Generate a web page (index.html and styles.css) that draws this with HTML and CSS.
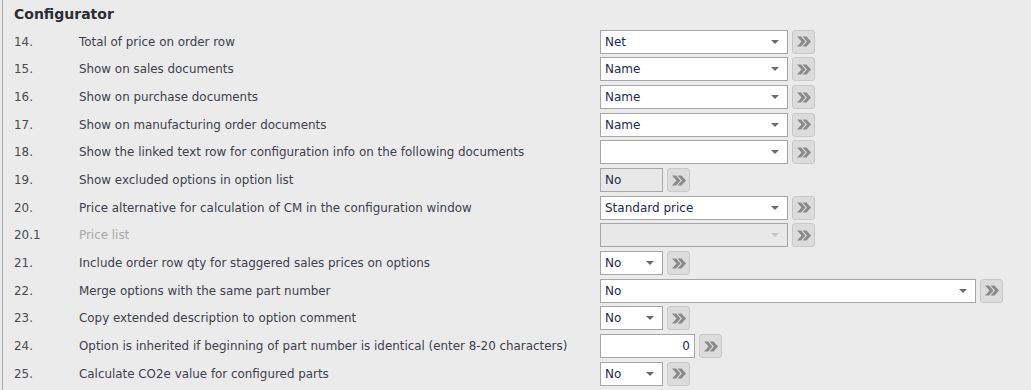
FILE: index.html
```html
<!DOCTYPE html>
<html lang="en">
<head>
  <meta charset="UTF-8" />
  <title>Configurator</title>
  <link rel="stylesheet" href="styles.css">
</head>
<body>

  <!-- Settings panel -->
  <div class="panel">
    <div class="panel-title">Configurator</div>

    <div class="rows">
      <div class="num">14.</div>
      <div class="label">Total of price on order row</div>
      <div class="ctrl"><div class="combo wide"><span>Net</span><i class="arrow"></i></div><div class="more"><svg viewBox="0 0 14 11"><path d="M0 0.5h4l4.5 5-4.5 5H0l4.5-5z M5.5 0.5h4l4.5 5-4.5 5h-4l4.5-5z"/></svg></div></div>

      <div class="num">15.</div>
      <div class="label">Show on sales documents</div>
      <div class="ctrl"><div class="combo wide"><span>Name</span><i class="arrow"></i></div><div class="more"><svg viewBox="0 0 14 11"><path d="M0 0.5h4l4.5 5-4.5 5H0l4.5-5z M5.5 0.5h4l4.5 5-4.5 5h-4l4.5-5z"/></svg></div></div>

      <div class="num">16.</div>
      <div class="label">Show on purchase documents</div>
      <div class="ctrl"><div class="combo wide"><span>Name</span><i class="arrow"></i></div><div class="more"><svg viewBox="0 0 14 11"><path d="M0 0.5h4l4.5 5-4.5 5H0l4.5-5z M5.5 0.5h4l4.5 5-4.5 5h-4l4.5-5z"/></svg></div></div>

      <div class="num">17.</div>
      <div class="label">Show on manufacturing order documents</div>
      <div class="ctrl"><div class="combo wide"><span>Name</span><i class="arrow"></i></div><div class="more"><svg viewBox="0 0 14 11"><path d="M0 0.5h4l4.5 5-4.5 5H0l4.5-5z M5.5 0.5h4l4.5 5-4.5 5h-4l4.5-5z"/></svg></div></div>

      <div class="num">18.</div>
      <div class="label">Show the linked text row for configuration info on the following documents</div>
      <div class="ctrl"><div class="combo wide"><span></span><i class="arrow"></i></div><div class="more"><svg viewBox="0 0 14 11"><path d="M0 0.5h4l4.5 5-4.5 5H0l4.5-5z M5.5 0.5h4l4.5 5-4.5 5h-4l4.5-5z"/></svg></div></div>

      <div class="num">19.</div>
      <div class="label">Show excluded options in option list</div>
      <div class="ctrl"><div class="combo small readonly"><span>No</span></div><div class="more"><svg viewBox="0 0 14 11"><path d="M0 0.5h4l4.5 5-4.5 5H0l4.5-5z M5.5 0.5h4l4.5 5-4.5 5h-4l4.5-5z"/></svg></div></div>

      <div class="num">20.</div>
      <div class="label">Price alternative for calculation of CM in the configuration window</div>
      <div class="ctrl"><div class="combo wide"><span>Standard price</span><i class="arrow"></i></div><div class="more"><svg viewBox="0 0 14 11"><path d="M0 0.5h4l4.5 5-4.5 5H0l4.5-5z M5.5 0.5h4l4.5 5-4.5 5h-4l4.5-5z"/></svg></div></div>

      <div class="num">20.1</div>
      <div class="label disabled">Price list</div>
      <div class="ctrl"><div class="combo wide readonly"><span></span><i class="arrow dim"></i></div><div class="more"><svg viewBox="0 0 14 11"><path d="M0 0.5h4l4.5 5-4.5 5H0l4.5-5z M5.5 0.5h4l4.5 5-4.5 5h-4l4.5-5z"/></svg></div></div>

      <div class="num">21.</div>
      <div class="label">Include order row qty for staggered sales prices on options</div>
      <div class="ctrl"><div class="combo small"><span>No</span><i class="arrow"></i></div><div class="more"><svg viewBox="0 0 14 11"><path d="M0 0.5h4l4.5 5-4.5 5H0l4.5-5z M5.5 0.5h4l4.5 5-4.5 5h-4l4.5-5z"/></svg></div></div>

      <div class="num">22.</div>
      <div class="label">Merge options with the same part number</div>
      <div class="ctrl"><div class="combo full"><span>No</span><i class="arrow"></i></div><div class="more"><svg viewBox="0 0 14 11"><path d="M0 0.5h4l4.5 5-4.5 5H0l4.5-5z M5.5 0.5h4l4.5 5-4.5 5h-4l4.5-5z"/></svg></div></div>

      <div class="num">23.</div>
      <div class="label">Copy extended description to option comment</div>
      <div class="ctrl"><div class="combo small"><span>No</span><i class="arrow"></i></div><div class="more"><svg viewBox="0 0 14 11"><path d="M0 0.5h4l4.5 5-4.5 5H0l4.5-5z M5.5 0.5h4l4.5 5-4.5 5h-4l4.5-5z"/></svg></div></div>

      <div class="num">24.</div>
      <div class="label">Option is inherited if beginning of part number is identical (enter 8-20 characters)</div>
      <div class="ctrl"><div class="combo numeric"><span>0</span></div><div class="more"><svg viewBox="0 0 14 11"><path d="M0 0.5h4l4.5 5-4.5 5H0l4.5-5z M5.5 0.5h4l4.5 5-4.5 5h-4l4.5-5z"/></svg></div></div>

      <div class="num">25.</div>
      <div class="label">Calculate CO2e value for configured parts</div>
      <div class="ctrl"><div class="combo small"><span>No</span><i class="arrow"></i></div><div class="more"><svg viewBox="0 0 14 11"><path d="M0 0.5h4l4.5 5-4.5 5H0l4.5-5z M5.5 0.5h4l4.5 5-4.5 5h-4l4.5-5z"/></svg></div></div>
    </div>
  </div>

</body>
</html>
```

FILE: styles.css
```css
body {
  margin: 0;
  background: #ebebeb;
  font-family: "DejaVu Sans", sans-serif;
  font-size: 11.9px;
  color: #40404c;
}

.panel {
  margin-left: 2px;
  height: 390px;
  border-left: 1px solid #a9a9a9;
  padding-left: 11px;
  box-sizing: border-box;
}

.panel-title {
  height: 28px;
  line-height: 28px;
  font-weight: bold;
  font-size: 14px;
  color: #2c2c34;
}

.rows {
  display: grid;
  grid-template-columns: 65px 521px auto;
  grid-auto-rows: 27.67px;
  align-items: center;
}

.num {
  color: #4a4a4a;
}

.label.disabled {
  color: #a8a8a8;
}

.ctrl {
  display: flex;
  align-items: center;
  gap: 4px;
}

.combo {
  height: 24px;
  box-sizing: border-box;
  border: 1px solid #a6a6a6;
  background: #fff;
  display: flex;
  align-items: center;
  padding: 0 4px;
  color: #1f2a52;
  font-size: 12px;
}

.combo span {
  flex: 1;
}

.combo.wide { width: 188px; }
.combo.small { width: 63px; }
.combo.full { width: 376px; }
.combo.numeric { width: 95px; text-align: right; }
.combo.readonly { background: #e8e8e8; }

.arrow {
  width: 0;
  height: 0;
  border-left: 4px solid transparent;
  border-right: 4px solid transparent;
  border-top: 4px solid #6b6b6b;
  margin-right: 4px;
}

.arrow.dim {
  border-top-color: #c4c4c4;
}

.more {
  width: 23px;
  height: 24px;
  box-sizing: border-box;
  border: 1px solid #c8c8c8;
  border-radius: 3px;
  background: #dcdcdc;
  display: flex;
  align-items: center;
  justify-content: center;
}

.more svg {
  width: 14px;
  height: 11px;
  fill: #8a8a8a;
}
```
